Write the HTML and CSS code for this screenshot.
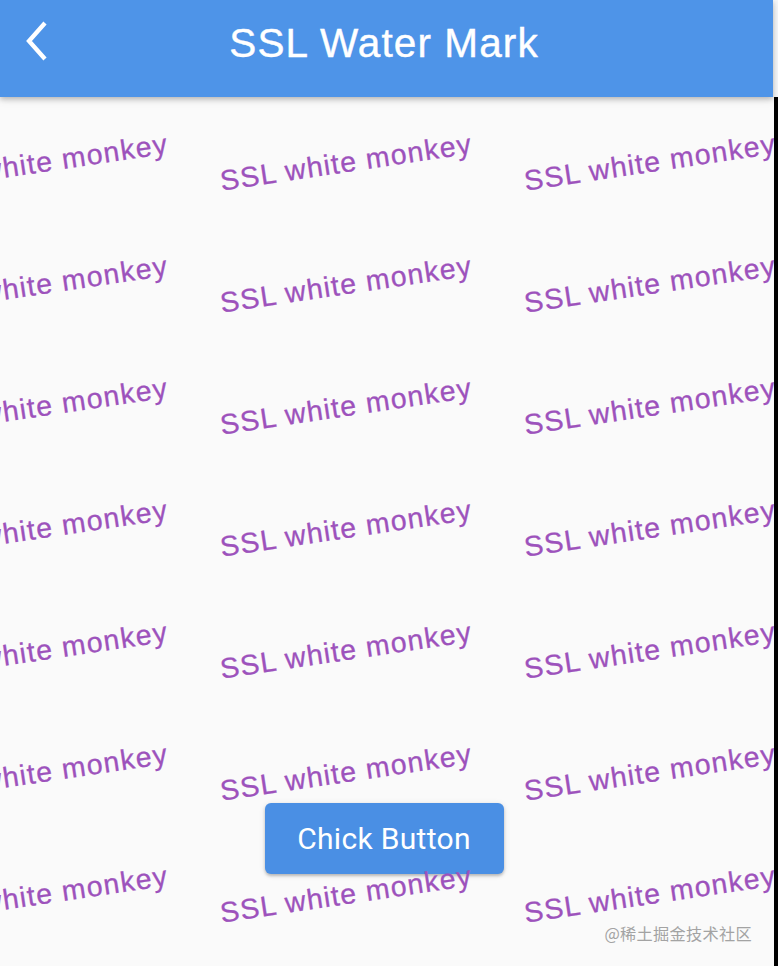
FILE: index.html
```html
<!DOCTYPE html>
<html lang="en">
<head>
<meta charset="utf-8">
<title>SSL Water Mark</title>
<link rel="stylesheet" href="styles.css">
</head>
<body>
<div class="screen">
  <header class="appbar">
    <div class="toolbar">
      <div class="lead">
        <svg class="back" width="30" height="44" viewBox="0 0 30 44" aria-label="Back">
          <polyline points="23,3 7,21 23,39" fill="none" stroke="#ffffff" stroke-width="4.3" stroke-linecap="butt" stroke-linejoin="miter"/>
        </svg>
      </div>
      <h1 class="title">SSL Water Mark</h1>
      <div class="trail"></div>
    </div>
  </header>
  <main class="body">
    <div class="content">
      <button class="btn" type="button">Chick Button</button>
    </div>
    <div class="watermarks" aria-hidden="true">
      <span class="wm">SSL white monkey</span><span class="wm">SSL white monkey</span><span class="wm">SSL white monkey</span>
      <span class="wm">SSL white monkey</span><span class="wm">SSL white monkey</span><span class="wm">SSL white monkey</span>
      <span class="wm">SSL white monkey</span><span class="wm">SSL white monkey</span><span class="wm">SSL white monkey</span>
      <span class="wm">SSL white monkey</span><span class="wm">SSL white monkey</span><span class="wm">SSL white monkey</span>
      <span class="wm">SSL white monkey</span><span class="wm">SSL white monkey</span><span class="wm">SSL white monkey</span>
      <span class="wm">SSL white monkey</span><span class="wm">SSL white monkey</span><span class="wm">SSL white monkey</span>
      <span class="wm">SSL white monkey</span><span class="wm">SSL white monkey</span><span class="wm">SSL white monkey</span>
    </div>
    <div class="credit">@稀土掘金技术社区</div>
  </main>
</div>
</body>
</html>
```

FILE: styles.css
```css
html, body {
  margin: 0;
  padding: 0;
}

body {
  width: 778px;
  height: 966px;
  overflow: hidden;
  background: #fafafa;
  font-family: "Liberation Sans", Arial, sans-serif;
}

.screen {
  width: 778px;
  height: 966px;
  display: flex;
  flex-direction: column;
  background: #f4f6f8;
}

.appbar {
  position: relative;
  z-index: 3;
  margin-right: 5px;
  height: 97px;
  background: #4e94e8;
  box-shadow: 0 2px 5px rgba(0, 0, 0, 0.22), 0 4px 8px rgba(0, 0, 0, 0.08);
}

.toolbar {
  width: 768px;
  height: 84px;
  display: grid;
  grid-template-columns: 1fr auto 1fr;
  align-items: center;
}

.lead {
  display: flex;
  align-items: center;
  padding-left: 22px;
}

.back {
  display: block;
}

.title {
  margin: 0;
  color: #ffffff;
  font-family: "Liberation Sans", Arial, sans-serif;
  font-weight: 400;
  font-size: 40.5px;
  letter-spacing: 1.1px;
  line-height: 1;
  padding-top: 2px;
  -webkit-text-stroke: 0.4px #ffffff;
}

.body {
  position: relative;
  flex: 1;
  background: #fafafa;
  border-right: 4px solid #000000;
  overflow: hidden;
}

.content {
  height: 100%;
  width: 768px;
  display: flex;
  flex-direction: column;
  align-items: center;
  justify-content: flex-end;
  box-sizing: border-box;
  padding-bottom: 92px;
}

.btn {
  width: 239px;
  height: 71px;
  border: none;
  border-radius: 6px;
  background: #4a8fe4;
  color: #ffffff;
  font-family: Roboto, "Liberation Sans", sans-serif;
  font-size: 30px;
  font-weight: 400;
  letter-spacing: 0.3px;
  box-shadow: 0 2px 3px rgba(0, 0, 0, 0.22), 0 1px 6px rgba(0, 0, 0, 0.1);
  padding: 0;
}

.watermarks {
  position: absolute;
  top: 4px;
  left: -110px;
  display: grid;
  grid-template-columns: repeat(3, 304px);
  grid-auto-rows: 122px;
  pointer-events: none;
}

.wm {
  display: flex;
  align-items: center;
  justify-content: center;
  white-space: nowrap;
  color: #9d52bc;
  font-family: "Liberation Sans", Arial, sans-serif;
  font-size: 28.5px;
  letter-spacing: 1.2px;
  -webkit-text-stroke: 0.3px #9d52bc;
  transform: rotate(-8.5deg);
}

.credit {
  position: absolute;
  right: 22px;
  bottom: 22px;
  color: #a3a3a3;
  font-family: "Noto Sans CJK SC", sans-serif;
  font-size: 16.2px;
  line-height: 22px;
  letter-spacing: 0.3px;
  pointer-events: none;
}
```
